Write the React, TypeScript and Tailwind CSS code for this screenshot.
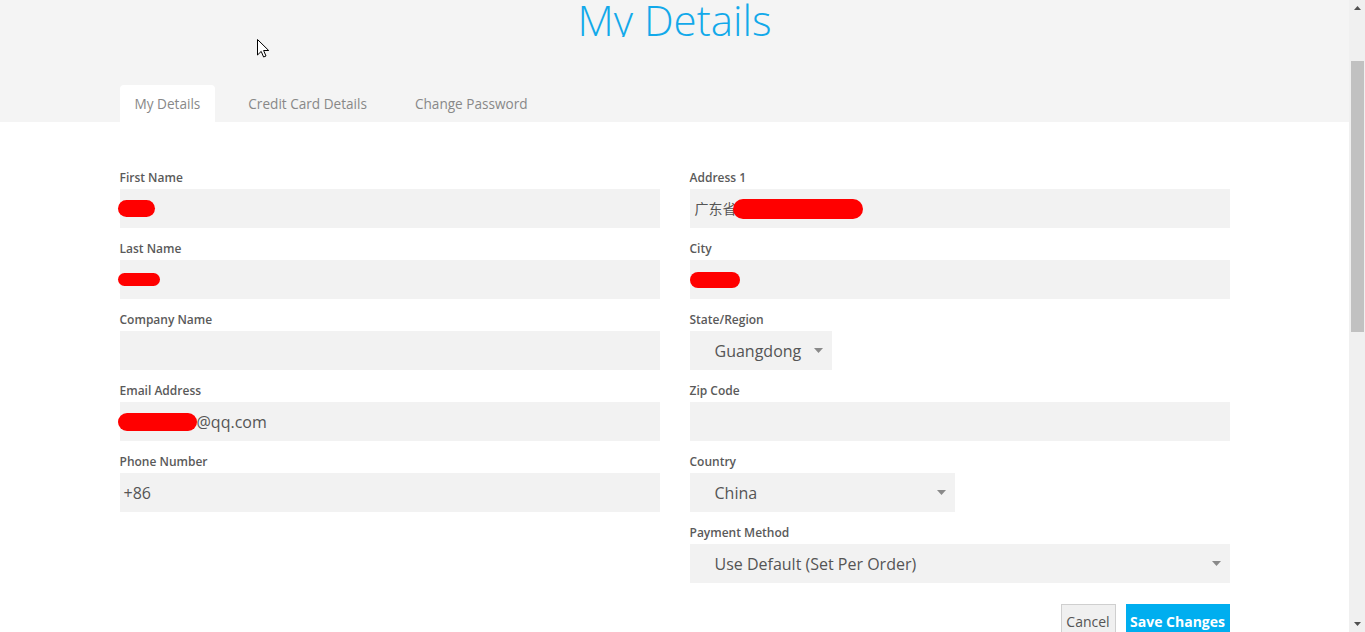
import React from "react";

const font = { fontFamily: '"Open Sans", "Noto Sans CJK SC", sans-serif' };

function Redact({ className }: { className: string }) {
  return <span className={`inline-block bg-[#ff0000] rounded-full align-middle ${className}`} />;
}

function Caret() {
  return (
    <svg width="9" height="5" viewBox="0 0 9 5" className="shrink-0">
      <path d="M0 0h9L4.5 5z" fill="#8a8a8a" />
    </svg>
  );
}

function Field({ label, children }: { label: string; children?: React.ReactNode }) {
  return (
    <div className="mb-[12px]">
      <div className="text-[12px] leading-[17px] font-semibold text-[#5a5a5a] mb-[3px]">{label}</div>
      <div className="h-[39px] bg-[#f2f2f2] flex items-center px-[4px] text-[16px] text-[#555]">{children}</div>
    </div>
  );
}

function SelectField({ label, value, width }: { label: string; value: string; width: string }) {
  return (
    <div className="mb-[12px]">
      <div className="text-[12px] leading-[17px] font-semibold text-[#5a5a5a] mb-[3px]">{label}</div>
      <div className={`h-[39px] bg-[#f2f2f2] flex items-center justify-between pl-[25px] pr-[9px] text-[16px] text-[#555] ${width}`}>
        <span>{value}</span>
        <Caret />
      </div>
    </div>
  );
}

function Scrollbar() {
  return (
    <div className="w-[16px] bg-[#f0f0f0] flex flex-col items-center shrink-0">
      <div className="h-[61px] w-full flex justify-center pt-[6px]">
        <svg width="7" height="4" viewBox="0 0 7 4"><path d="M0 4h7L3.5 0z" fill="#505050" /></svg>
      </div>
      <div className="w-[13px] h-[271px] bg-[#c1c1c1] ml-[1px]" />
      <div className="flex-1 w-full flex items-end justify-center pb-[6px]">
        <svg width="7" height="4" viewBox="0 0 7 4"><path d="M0 0h7L3.5 4z" fill="#505050" /></svg>
      </div>
    </div>
  );
}

export default function App() {
  return (
    <div className="h-[632px] w-[1365px] flex overflow-hidden bg-white relative" style={font}>
      <div className="flex-1 min-w-0">
        <header className="bg-[#f4f4f4] h-[122px] flex flex-col">
          {/* heading is clipped at the top of the viewport in the reference */}
          <h1 className="text-center text-[42px] leading-[39px] font-light text-[#12a9ea] h-[37px] overflow-hidden">
            My Details
          </h1>
          <div className="mt-auto w-[1110px] mx-auto flex gap-[18px] text-[13.6px] text-[#888]">
            <div className="bg-white rounded-t-[4px] px-[15px] pt-[2px] h-[37px] flex items-center">My Details</div>
            <div className="px-[15px] pt-[2px] h-[37px] flex items-center">Credit Card Details</div>
            <div className="px-[15px] pt-[2px] h-[37px] flex items-center">Change Password</div>
          </div>
        </header>

        <main className="w-[1110px] mx-auto pt-[47px] grid grid-cols-2 gap-x-[30px]">
          <div>
            <Field label="First Name">
              <Redact className="w-[37px] h-[17px] -ml-[6px]" />
            </Field>
            <Field label="Last Name">
              <Redact className="w-[42px] h-[13px] -ml-[6px]" />
            </Field>
            <Field label="Company Name" />
            <Field label="Email Address">
              <Redact className="w-[79px] h-[18px] -ml-[6px]" />
              <span>@qq.com</span>
            </Field>
            <Field label="Phone Number">
              <span>+86</span>
            </Field>
          </div>
          <div>
            <Field label="Address 1">
              <span className="text-[14px] pl-[1px]">广东省</span>
              <Redact className="w-[130px] h-[20px] -ml-[4px]" />
            </Field>
            <Field label="City">
              <Redact className="w-[50px] h-[16px] -ml-[4px]" />
            </Field>
            <SelectField label="State/Region" value="Guangdong" width="w-[142px]" />
            <Field label="Zip Code" />
            <SelectField label="Country" value="China" width="w-[265px]" />
            <SelectField label="Payment Method" value="Use Default (Set Per Order)" width="w-full" />
            <div className="flex justify-end gap-[10px] mt-[21px]">
              <button className="h-[34px] w-[55px] bg-[#f0f0f0] border border-[#cfcfcf] text-[14px] text-[#555]">Cancel</button>
              <button className="h-[34px] w-[104px] bg-[#00aeef] text-[14px] font-bold text-white">Save Changes</button>
            </div>
          </div>
        </main>
      </div>
      <Scrollbar />

      <svg className="absolute left-[257px] top-[39px]" width="13" height="20" viewBox="0 0 13 20">
        <path d="M0.5 0.5v15.5l3.7-3.6 2.4 5.6 2.4-1-2.4-5.5h5.1z" fill="#fff" stroke="#000" strokeWidth="1" strokeLinejoin="miter" />
      </svg>
    </div>
  );
}
